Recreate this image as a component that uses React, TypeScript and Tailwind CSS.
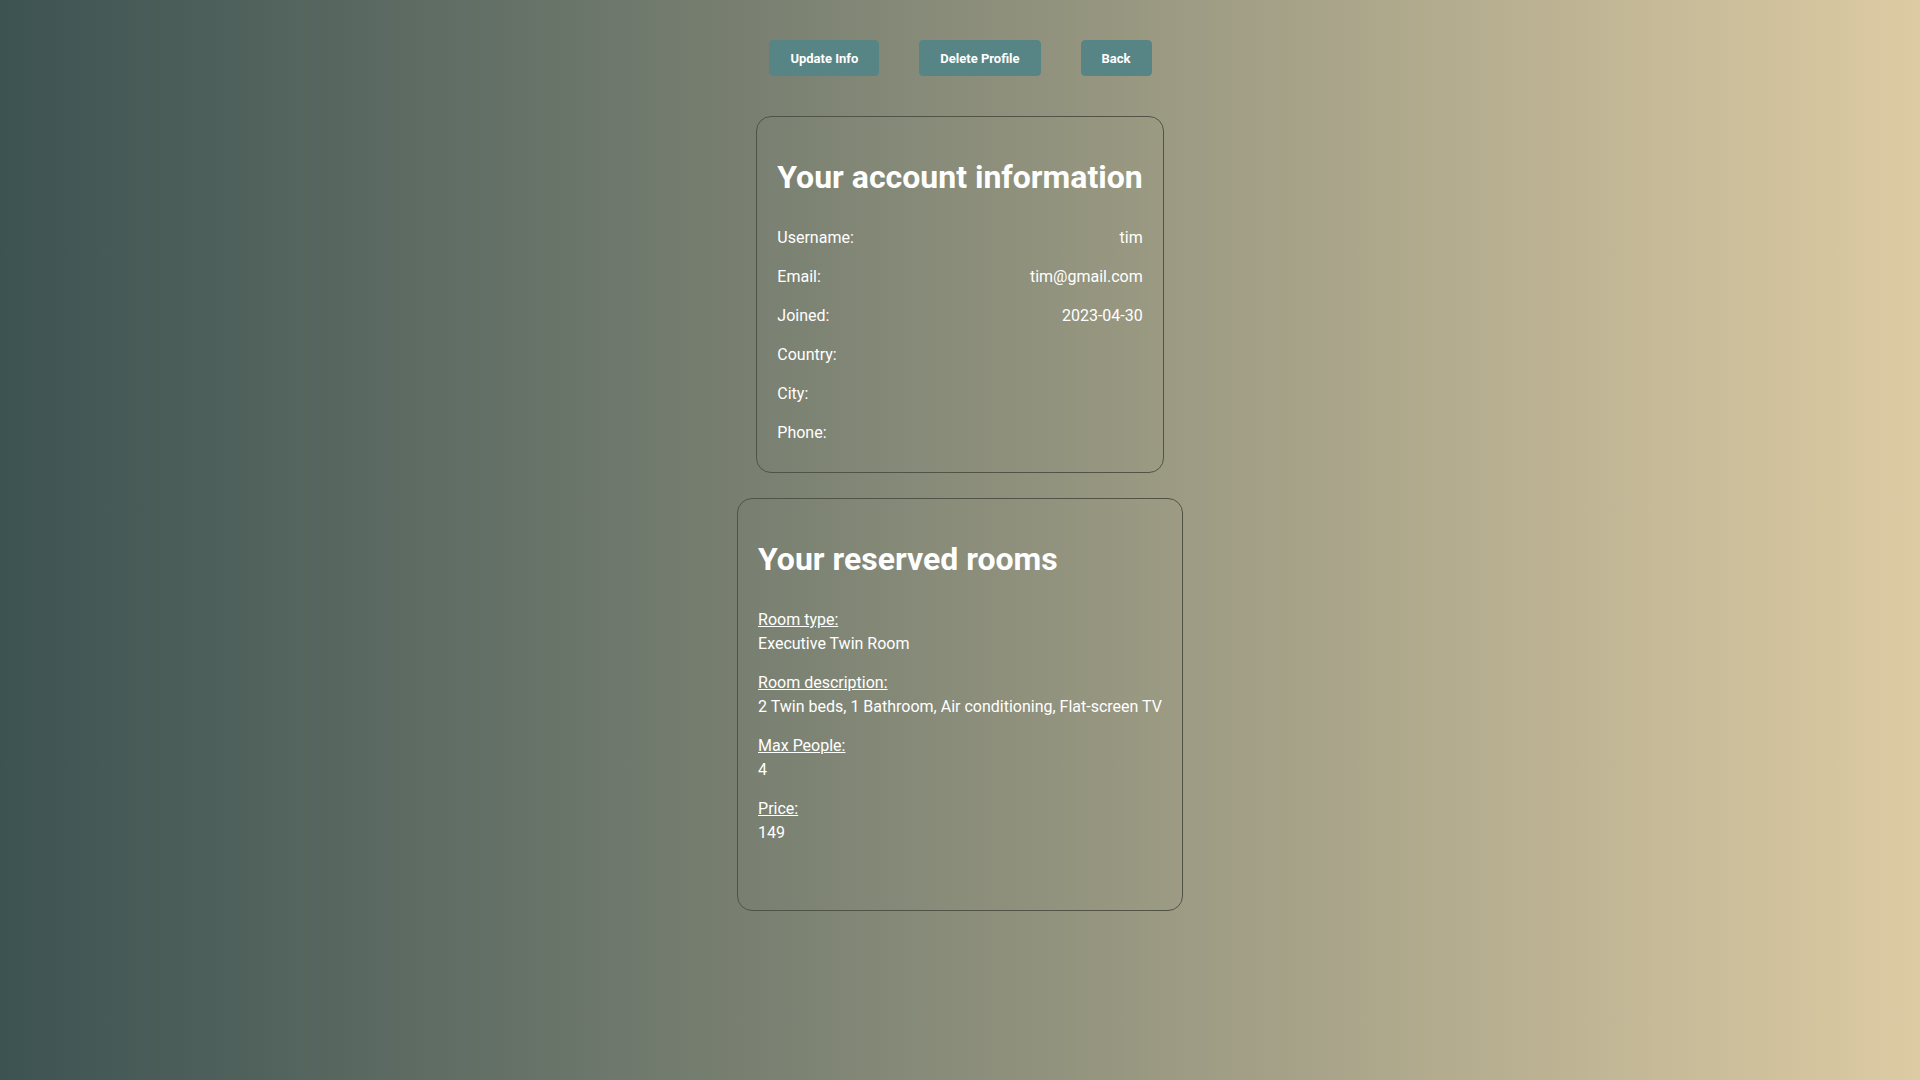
const account = [
  { label: "Username:", value: "tim" },
  { label: "Email:", value: "tim@gmail.com" },
  { label: "Joined:", value: "2023-04-30" },
  { label: "Country:", value: "" },
  { label: "City:", value: "" },
  { label: "Phone:", value: "" },
];

const room = [
  { label: "Room type:", value: "Executive Twin Room" },
  { label: "Room description:", value: "2 Twin beds, 1 Bathroom, Air conditioning, Flat-screen TV" },
  { label: "Max People:", value: "4" },
  { label: "Price:", value: "149" },
];

export default function App() {
  return (
    <div
      className="min-h-screen w-full bg-gradient-to-r from-[#3d5352] to-[#ddcba3] text-white flex flex-col items-center pt-10"
      style={{ fontFamily: "Roboto, 'Liberation Sans', sans-serif" }}
    >
      <div className="flex gap-10 pl-px">
        <button className="h-9 px-5 pt-[2px] bg-[#578585] border border-[#578585] rounded-[4px] text-[13px] font-bold">
          Update Info
        </button>
        <button className="h-9 px-5 pt-[2px] bg-[#578585] border border-[#578585] rounded-[4px] text-[13px] font-bold">
          Delete Profile
        </button>
        <button className="h-9 px-5 pt-[2px] bg-[#578585] border border-[#578585] rounded-[4px] text-[13px] font-bold">
          Back
        </button>
      </div>

      <div className="mt-10 w-fit border border-[#505346] rounded-[15px] p-5 pb-[27px]">
        <h1 className="text-[32px] leading-[37.5px] font-bold mt-[22px] mb-[29px]">Your account information</h1>
        <div className="flex flex-col gap-[15px]">
          {account.map((row) => (
            <div key={row.label} className="flex justify-between text-base leading-6">
              <span>{row.label}</span>
              <span>{row.value}</span>
            </div>
          ))}
        </div>
      </div>

      <div className="mt-[25px] w-fit border border-[#505346] rounded-[15px] p-5 pb-[65px]">
        <h1 className="text-[32px] leading-[37.5px] font-bold mt-[22px] mb-[30px]">Your reserved rooms</h1>
        <div className="flex flex-col gap-[15px]">
          {room.map((item) => (
            <div key={item.label} className="text-base leading-6">
              <div className="underline">{item.label}</div>
              <div>{item.value}</div>
            </div>
          ))}
        </div>
      </div>
    </div>
  );
}
